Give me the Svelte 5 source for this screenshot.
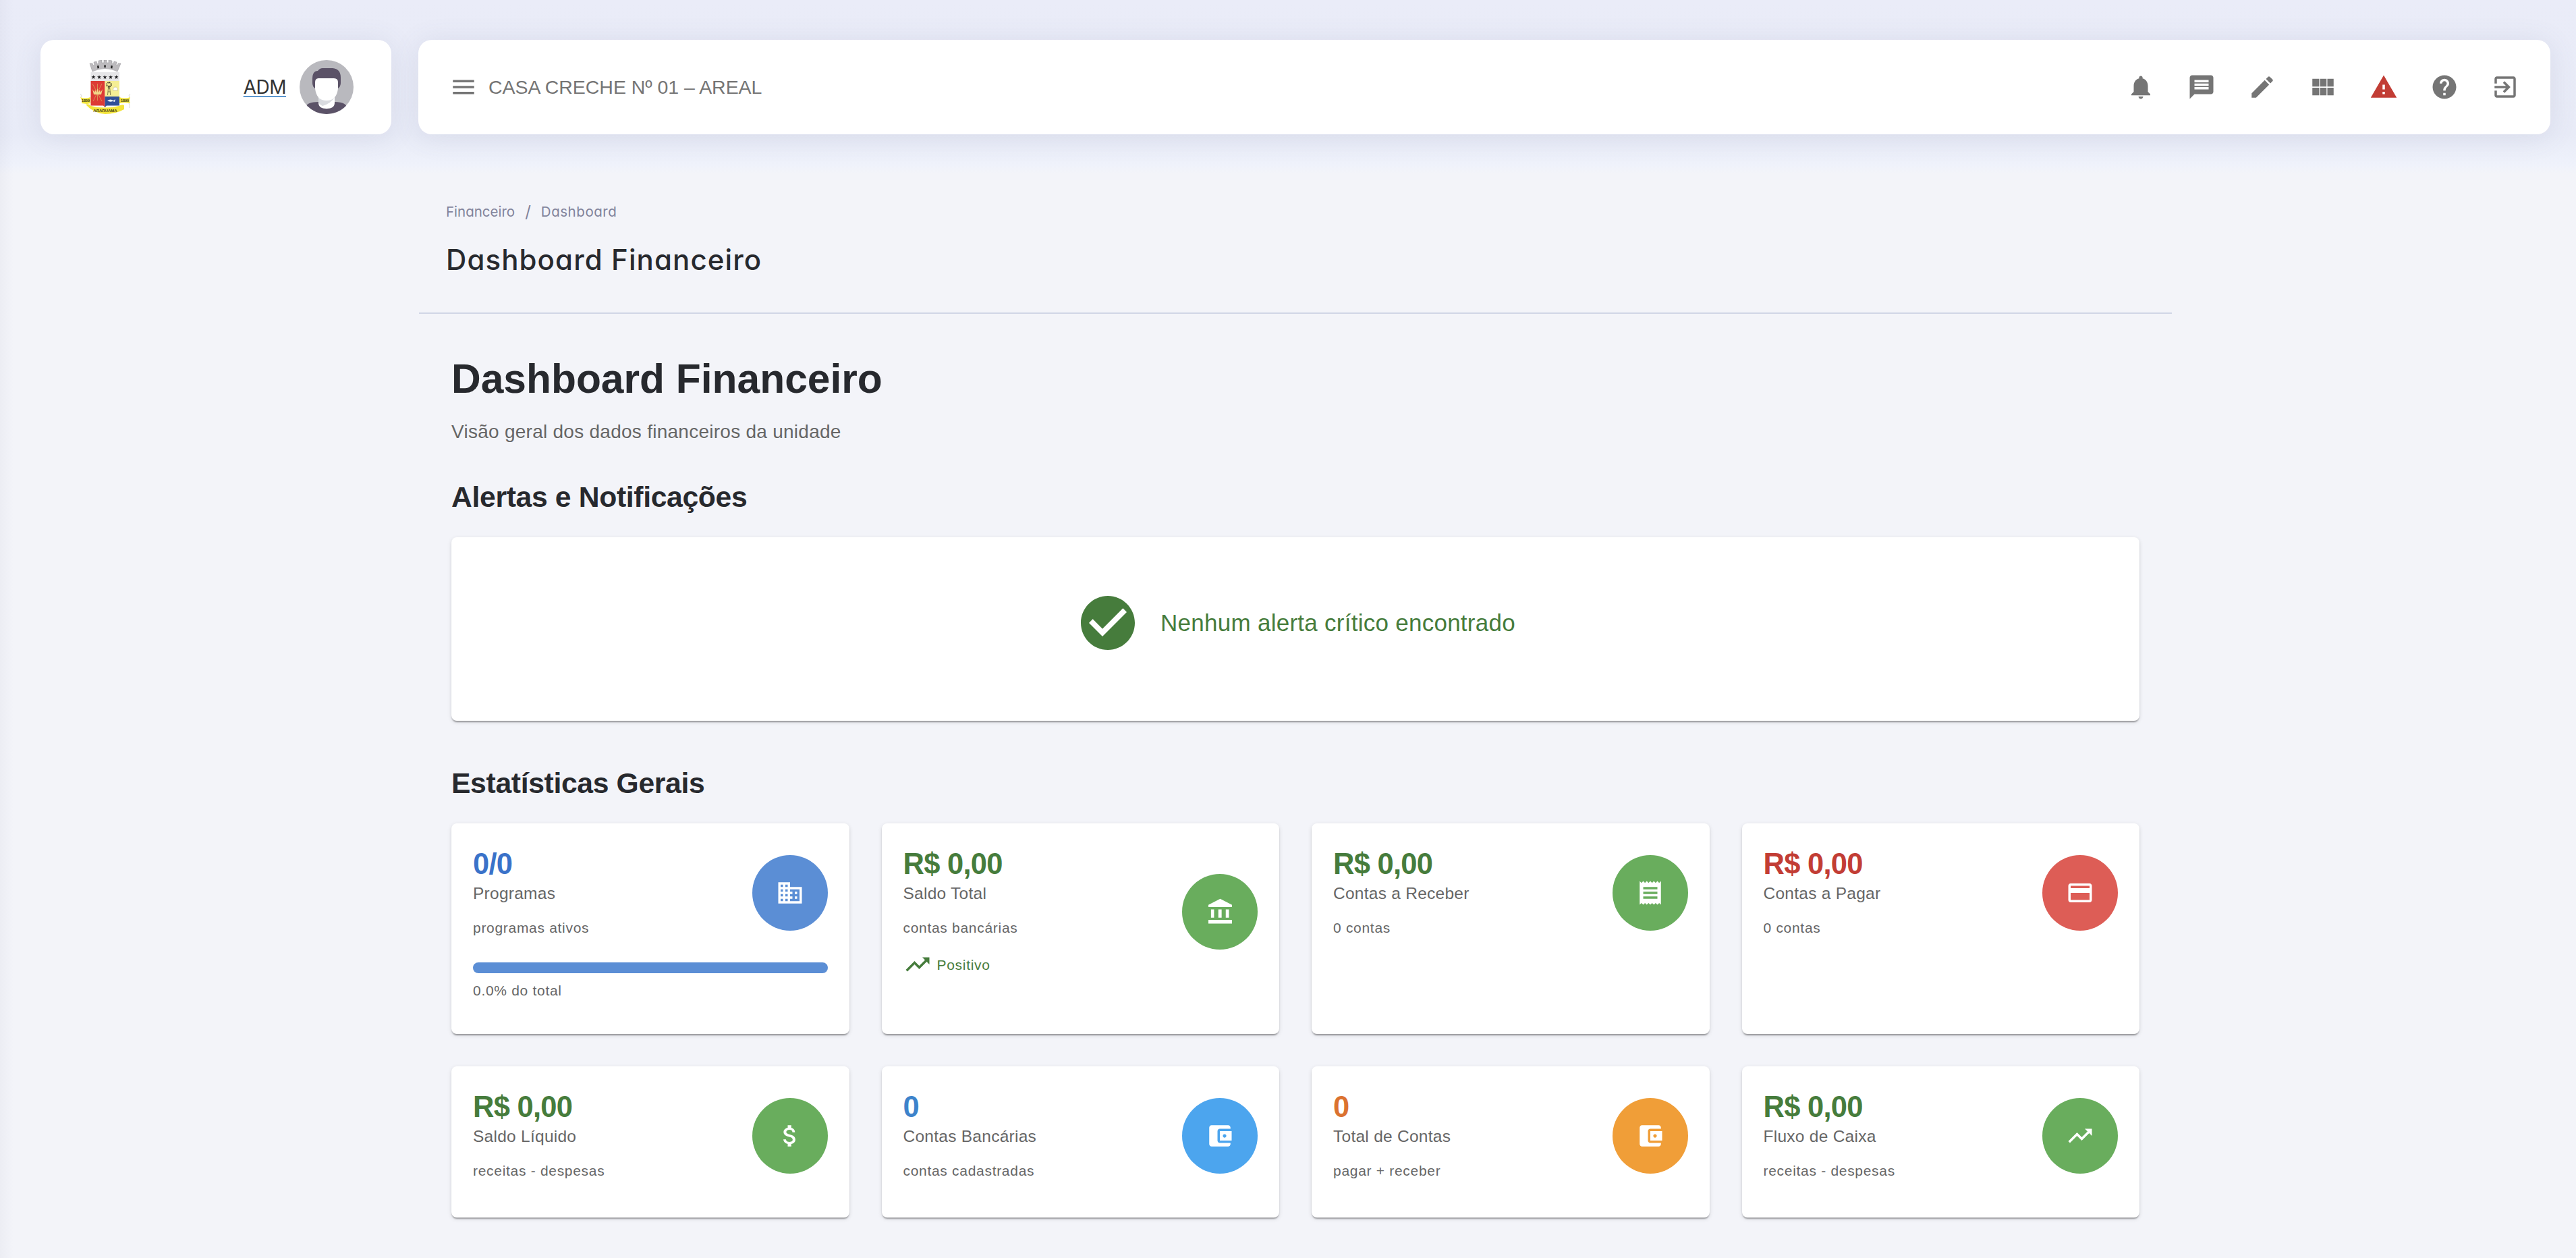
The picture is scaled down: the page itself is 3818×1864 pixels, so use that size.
<script>
  // Material icon outlines on a 24-unit grid
  const icons = {
    menu: 'M3 18h18v-2H3v2zm0-5h18v-2H3v2zm0-7v2h18V6H3z',
    bell: 'M12 22c1.1 0 2-.9 2-2h-4c0 1.1.89 2 2 2zm6-6v-5c0-3.07-1.64-5.64-4.5-6.32V4c0-.83-.67-1.5-1.5-1.5s-1.5.67-1.5 1.5v.68C7.63 5.36 6 7.92 6 11v5l-2 2v1h16v-1l-2-2z',
    chat: 'M20 2H4c-1.1 0-1.99.9-1.99 2L2 22l4-4h14c1.1 0 2-.9 2-2V4c0-1.1-.9-2-2-2zm-2 12H6v-2h12v2zm0-3H6V9h12v2zm0-3H6V6h12v2z',
    edit: 'M3 17.25V21h3.75L17.81 9.94l-3.75-3.75L3 17.25zM20.71 7.04c.39-.39.39-1.02 0-1.41l-2.34-2.34c-.39-.39-1.02-.39-1.41 0l-1.83 1.83 3.75 3.75 1.83-1.83z',
    modules: 'M3 11.500h5.800V5H3v6.500zm0 7.500h5.800v-6.500H3V19zm6.500 0h5.500v-6.500H9.500V19zm6.200 0H21v-6.500h-5.300V19zm-6.200-7.500h5.500V5H9.500v6.500zM15.700 5v6.500H21V5h-5.300z',
    warning: 'M1 21h22L12 2 1 21zm12-3h-2v-2h2v2zm0-4h-2v-4h2v4z',
    help: 'M12 2C6.48 2 2 6.48 2 12s4.48 10 10 10 10-4.48 10-10S17.52 2 12 2zm1 17h-2v-2h2v2zm2.07-7.75l-.9.92C13.45 12.9 13 13.5 13 15h-2v-.5c0-1.1.45-2.1 1.17-2.83l1.24-1.26c.37-.36.59-.86.59-1.41 0-1.1-.9-2-2-2s-2 .9-2 2H8c0-2.21 1.79-4 4-4s4 1.79 4 4c0 .88-.36 1.68-.93 2.25z',
    exit: 'M10.09 15.59L11.5 17l5-5-5-5-1.41 1.41L12.67 11H3v2h9.67l-2.58 2.59zM19 3H5c-1.11 0-2 .9-2 2v4h2V5h14v14H5v-4H3v4c0 1.1.89 2 2 2h14c1.1 0 2-.9 2-2V5c0-1.1-.9-2-2-2z',
    check: 'M12 2C6.48 2 2 6.48 2 12s4.48 10 10 10 10-4.48 10-10S17.52 2 12 2zm-2 15l-5-5 1.41-1.41L10 14.17l7.59-7.59L19 8l-9 9z',
    business: 'M12 7V3H2v18h20V7H12zM6 19H4v-2h2v2zm0-4H4v-2h2v2zm0-4H4V9h2v2zm0-4H4V5h2v2zm4 12H8v-2h2v2zm0-4H8v-2h2v2zm0-4H8V9h2v2zm0-4H8V5h2v2zm10 12h-8v-2h2v-2h-2v-2h2v-2h-2V9h8v10zm-2-8h-2v2h2v-2zm0 4h-2v2h2v-2z',
    bank: 'M4.500 10v7h2.600v-7H4.500zm6.200 0v7h2.800v-7h-2.800zM2.300 22h20v-3.200h-20V22zm14.700-12v7h2.700v-7H17zm-4.700-9l-10 5.200V8h20V6.200L12.300 1z',
    receipt: 'M18 17H6v-2h12v2zm0-4H6v-2h12v2zm0-4H6V7h12v2zM3 22l1.500-1.500L6 22l1.500-1.500L9 22l1.500-1.500L12 22l1.500-1.500L15 22l1.500-1.500L18 22l1.500-1.500L21 22V2l-1.500 1.500L18 2l-1.500 1.500L15 2l-1.500 1.500L12 2l-1.500 1.500L9 2 7.500 3.500 6 2 4.500 3.500 3 2v20z',
    card: 'M20 4H4c-1.110 0-1.990.89-1.990 2L2 18c0 1.110.89 2 2 2h16c1.110 0 2-.89 2-2V6c0-1.110-.89-2-2-2zm0 14H4v-6h16v6zm0-10H4V6h16v2z',
    money: 'M11.800 10.900c-2.270-.59-3-1.200-3-2.150 0-1.090 1.010-1.850 2.700-1.850 1.780 0 2.440.85 2.500 2.100h2.210c-.07-1.720-1.120-3.300-3.210-3.810V3h-3v2.160c-1.940.42-3.500 1.680-3.500 3.610 0 2.310 1.910 3.460 4.700 4.130 2.500.6 3 1.480 3 2.410 0 .69-.49 1.790-2.700 1.790-2.060 0-2.870-.92-2.980-2.100h-2.200c.12 2.190 1.760 3.420 3.680 3.830V21h3v-2.150c1.950-.37 3.500-1.500 3.500-3.550 0-2.840-2.430-3.810-4.700-4.400z',
    wallet: 'M21 18v1c0 1.100-.9 2-2 2H5c-1.110 0-2-.9-2-2V5c0-1.100.89-2 2-2h14c1.100 0 2 .9 2 2v1h-9c-1.110 0-2 .9-2 2v8c0 1.100.89 2 2 2h9zm-9-2h10V8H12v8zm4-2.500c-.83 0-1.500-.67-1.500-1.500s.67-1.500 1.500-1.500 1.500.67 1.500 1.500-.67 1.500-1.500 1.500z',
    trend: 'M16 6l2.290 2.290-4.880 4.880-4-4L2 16.590 3.410 18l6-6 4 4 6.300-6.290L22 12V6z'
  };

  const tools = ['bell', 'chat', 'edit', 'modules', 'warning', 'help', 'exit'];

  const stats = [
    { value: '0/0', label: 'Programas', note: 'programas ativos', icon: 'business', tone: 'blue', percent: '0.0% do total' },
    { value: 'R$ 0,00', label: 'Saldo Total', note: 'contas bancárias', icon: 'bank', tone: 'green', trend: 'Positivo' },
    { value: 'R$ 0,00', label: 'Contas a Receber', note: '0 contas', icon: 'receipt', tone: 'green' },
    { value: 'R$ 0,00', label: 'Contas a Pagar', note: '0 contas', icon: 'card', tone: 'red' },
    { value: 'R$ 0,00', label: 'Saldo Líquido', note: 'receitas - despesas', icon: 'money', tone: 'green' },
    { value: '0', label: 'Contas Bancárias', note: 'contas cadastradas', icon: 'wallet', tone: 'sky' },
    { value: '0', label: 'Total de Contas', note: 'pagar + receber', icon: 'wallet', tone: 'orange' },
    { value: 'R$ 0,00', label: 'Fluxo de Caixa', note: 'receitas - despesas', icon: 'trend', tone: 'green' }
  ];
  const stars = [20.5, 29, 37.5, 46, 54.5];
</script>

{#snippet icon(name)}
  <svg class="icon" viewBox="0 0 24 24" aria-hidden="true"><path d={icons[name]} /></svg>
{/snippet}

<div class="page">
  <header class="top">
    <div class="panel brand">
      <svg class="crest" viewBox="0 0 76 80" role="img" aria-label="Araruama">
        <path d="M15 5l4 0 1 3 2-1-1-4 4-1 1 4 2-1 0-4 5-1 0 4 3 0 0-4 4 0 0 4 3 0 0-4 5 1 0 4 2 1 1-4 4 1-1 4 2 1 1-3 4 0-5 12q-18-9-37 0z" fill="#bdbbbe" stroke="#8f8d92" stroke-width=".5" />
        <g fill="#222"><path d="M26 8.500l2.400-.5.5 4-2.400.5zM36.300 7.500h2.500v3.500h-2.500zM46.500 8l2.400.5-.5 4-2.400-.5z" /></g>
        <path d="M16.500 18H59v13H16.500z" fill="#e6e6e8" />
        {#each stars as x}
          <path transform="translate({x} 25.3) scale(.85)" d="M0-3.600l.9 2.500h2.600l-2.100 1.600.8 2.600L0 1.600l-2.200 1.500.8-2.600-2.100-1.600h2.600z" fill="#1c1c1e" />
        {/each}
        <path d="M16.500 31h21v39L35 67.500H16.500z" fill="#dd3a35" />
        <path d="M37.500 31H59v23H37.500z" fill="#f5ee95" />
        <path d="M37.500 54H59v13.500H40L37.500 70z" fill="#304f98" />
        <path d="M19 35l14 26M33 35L20 61M26.500 35v25" stroke="#d9a25a" stroke-width=".8" fill="none" />
        <path d="M19 43l3 5 1-4 2 4 1.500-6 1.500 6 2-4 1 4 3-5-2 8H21z" fill="#f0d98a" />
        <path d="M41.500 52l1.300-14h1.600l1.300 14M42 47h3.500M42.500 42h2.500" stroke="#55502e" stroke-width=".7" fill="none" />
        <circle cx="43.500" cy="36.500" r="3.300" fill="none" stroke="#2c2a20" stroke-width="1.800" stroke-dasharray="1.500 1.100" />
        <path d="M49.500 45q0-5 3.500-5t3.500 5z" fill="#fff" stroke="#aaa27a" stroke-width=".5" />
        <path d="M41 60q5-3 9 0l3-2-1 4-3-1q-4 2-8-1z" fill="#e8eef5" />
        <path d="M1 55q7 3 15 0v9l-5 1-8-1q1-4-2-9zM59 55q8 3 16 0-2 5 0 9l-8-1-8 1z" fill="#f2e43c" />
        <path d="M1 50q3 2 1 5M75 50q-3 2-1 5M73 64q2 3 1 7" fill="none" stroke="#bbb" stroke-width=".6" />
        <path d="M9 66q5-2 8 2 20 5 41 0 5-3 8-1v6q-13 7-28 7-17-1-29-14z" fill="#f3e43a" />
        <g class="motto"><text x="9" y="61.500">1859</text><text x="67" y="61.500">1890</text><text class="city" x="38" y="77">ARARUAMA</text></g>
      </svg>
      <div class="user">
        <a href="#adm">ADM</a>
        <svg class="avatar" viewBox="0 0 80 80" role="img" aria-label="ADM">
          <defs><clipPath id="avatar-clip"><circle cx="40" cy="40" r="40" /></clipPath></defs>
          <g clip-path="url(#avatar-clip)">
            <path d="M0 0h80v80H0z" fill="#b9b9be" />
            <path d="M9 69q3-7 19-7h24q15 0 18 7v13H9z" fill="#5b5267" />
            <path d="M28 54h24v9q0 9-12 9t-12-9z" fill="#fff" />
            <path d="M28 56q11 6 24-1-5 9-18 13-6-3-6-7z" fill="#d9dbe0" />
            <path d="M19 34V28q0-12 8-12 3-4 7-4h15q12 1 12 14v8q0 5-4 8H23q-4-3-4-8z" fill="#5b5267" />
            <path d="M28 27h23q6 0 6 6v9q-2 18-17 18T23 42v-9q0-6 5-6z" fill="#fff" />
          </g>
        </svg>
      </div>
    </div>
    <div class="panel bar">
      <div class="unit">{@render icon('menu')}<span>CASA CRECHE Nº 01 – AREAL</span></div>
      <nav class="tools">
        {#each tools as tool}
          <span class="tool {tool}">{@render icon(tool)}</span>
        {/each}
      </nav>
    </div>
  </header>

  <main>
    <div class="title-block">
      <div class="crumbs"><span>Financeiro</span><i>/</i><span class="current">Dashboard</span></div>
      <h2 class="page-title">Dashboard Financeiro</h2>
    </div>

    <div class="content">
      <h1>Dashboard Financeiro</h1>
      <p class="lead">Visão geral dos dados financeiros da unidade</p>

      <h3 class="alerts-title">Alertas e Notificações</h3>
      <section class="card alert">
        {@render icon('check')}
        <span>Nenhum alerta crítico encontrado</span>
      </section>

      <h3 class="stats-title">Estatísticas Gerais</h3>
      <section class="grid">
        {#each stats as s}
          <article class="card stat {s.tone}">
            <div class="head">
              <div class="text">
                <div class="value">{s.value}</div>
                <div class="label">{s.label}</div>
                <div class="note">{s.note}</div>
                {#if s.trend}
                  <div class="trend">{@render icon('trend')}<span>{s.trend}</span></div>
                {/if}
              </div>
              <div class="badge">{@render icon(s.icon)}</div>
            </div>
            {#if s.percent}
              <div class="progress"></div>
              <div class="percent">{s.percent}</div>
            {/if}
          </article>
        {/each}
      </section>
    </div>
  </main>
</div>

<style>
  :global(body) { background: #f3f4f9; }
  * { box-sizing: border-box; }
  h1, h2, h3, p { margin: 0; }
  .page {
    height: 1864px;
    overflow: hidden;
    background:
      linear-gradient(to right, rgba(70, 70, 110, .04), transparent 20px),
      linear-gradient(#eaecf8 0, #e8ebf7 200px, #eff2fb 244px, #f3f4f9 258px);
    color: #27292e;
    font-family: "Liberation Sans", Arial, sans-serif;
  }
  .icon { display: block; width: 42px; height: 42px; fill: currentColor; flex: none; }

  .top {
    display: flex;
    gap: 40px;
    height: 260px;
    padding: 59px 38px 0 60px;
  }
  .panel {
    display: flex;
    align-items: center;
    justify-content: space-between;
    height: 140px;
    border-radius: 20px;
    background: #fff;
    box-shadow: 0 4px 40px rgba(90, 100, 130, .12);
  }
  .brand { width: 520px; padding: 0 56px 0 58px; }
  .crest { width: 76px; height: 80px; }
  .motto { font: bold 5.500px "Liberation Sans", sans-serif; fill: #3b3512; text-anchor: middle; }
  .motto .city { font-size: 6px; }
  .user { display: flex; align-items: center; gap: 20px; }
  .user a {
    color: #333;
    font: 28px/34px Inter, sans-serif;
    letter-spacing: -.5px;
    text-decoration: underline 2px #5c97cf;
    text-underline-offset: 3px;
  }
  .avatar { width: 80px; height: 80px; }
  .bar { flex: 1; padding: 0 46px; color: #757575; }
  .unit { display: flex; align-items: center; gap: 16px; font-size: 28.5px; line-height: 40px; letter-spacing: -.04px; }
  .tools { display: flex; gap: 48px; }
  .warning { color: #c23d35; }

  main { width: 2598px; margin-left: 621px; }
  .title-block { height: 205px; padding: 40px; border-bottom: 2px solid #d1d6e6; font-family: Inter, sans-serif; font-feature-settings: "cv11"; }
  .crumbs { display: flex; gap: 15px; font-size: 20.5px; line-height: 28px; color: #81839b; }
  .crumbs i { font-size: 24px; font-style: normal; }
  .crumbs .current { letter-spacing: .55px; }
  .page-title { margin-top: 32px; font-size: 42px; line-height: 50px; font-weight: 500; letter-spacing: 1.1px; }

  .content { padding: 59px 48px 0; }
  h1 { font-size: 60.5px; line-height: 74px; }
  .lead { margin-top: 21px; font-size: 28px; line-height: 42px; letter-spacing: .00938em; color: #666; }
  h3 { font-size: 42.7px; line-height: 56px; letter-spacing: -.35px; }
  .alerts-title { margin: 47px 0 32px; }
  .stats-title { margin: 64px 0 32px; }
  .card {
    border-radius: 8px;
    background: #fff;
    box-shadow: 0 4px 2px -2px rgba(0, 0, 0, .2), 0 2px 2px rgba(0, 0, 0, .14), 0 2px 6px rgba(0, 0, 0, .12);
  }
  .alert {
    display: flex;
    align-items: center;
    justify-content: center;
    gap: 30px;
    height: 272px;
    padding-bottom: 18px;
    color: #467c3c;
    font-size: 35px;
    letter-spacing: .0075em;
  }
  .alert .icon { width: 96px; height: 96px; }

  .grid { display: grid; grid-template-columns: repeat(4, 1fr); grid-template-rows: 312px 224px; gap: 48px; }
  .stat { padding: 32px; }
  .head { display: flex; align-items: center; justify-content: space-between; }
  .value { font-size: 43.5px; font-weight: 700; line-height: 56px; letter-spacing: -.75px; color: var(--ink); }
  .label { margin-top: -2px; font-size: 24.5px; line-height: 35px; letter-spacing: .01071em; color: #666; }
  .note { margin: 16px 0 2px; }
  .note, .percent, .trend { font-size: 21px; line-height: 35px; letter-spacing: .03333em; color: #666; }
  .trend { display: flex; align-items: center; gap: 8px; height: 42px; margin-top: 16px; color: var(--ink); }
  .badge {
    display: grid;
    place-items: center;
    width: 112px;
    height: 112px;
    border-radius: 50%;
    background: var(--fill);
    color: #fff;
  }
  .progress { height: 16px; margin-top: 32px; border-radius: 8px; background: var(--fill); }
  .percent { margin-top: 8px; }
  .blue { --ink: #3a72c9; --fill: #5b8ed5; }
  .green { --ink: #467c3c; --fill: #69ad5d; }
  .red { --ink: #c23d35; --fill: #dd5d56; }
  .sky { --ink: #3d83cb; --fill: #4ca5ee; }
  .orange { --ink: #db7230; --fill: #f09e38; }
</style>
